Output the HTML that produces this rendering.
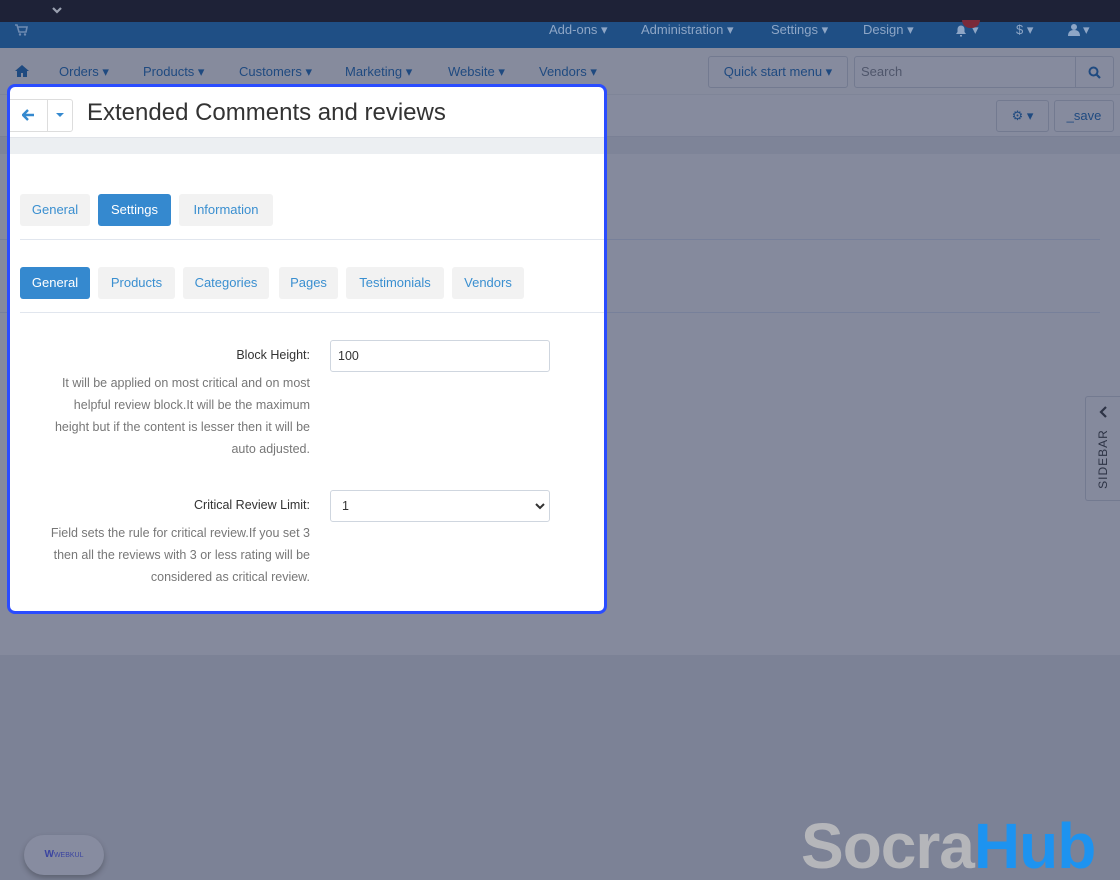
<!DOCTYPE html>
<html><head><meta charset="utf-8"><style>
*{box-sizing:border-box;margin:0;padding:0}
html,body{width:1120px;height:880px;overflow:hidden}
body{background:#7c8296;font-family:"Liberation Sans","DejaVu Sans",sans-serif;position:relative;font-size:13px}
.abs{position:absolute}
.top{left:0;top:0;width:1120px;height:22px;background:#1e2237}
.blue{left:0;top:22px;width:1120px;height:26px;background:#1f4f85;color:#8ea6c6;font-size:13px}
.blue span{position:absolute;top:0px}
.nav{left:0;top:48px;width:1120px;height:47px;background:#868b9d;border-bottom:1px solid #7f8598}
.nav span{position:absolute;top:16px;color:#1f4a80;font-size:13px}
.tool{left:0;top:95px;width:1120px;height:42px;background:#868b9e;border-bottom:1px solid #7a8095}
.band{left:0;top:137px;width:1120px;height:17px;background:#7e8498}
.main{left:0;top:154px;width:1120px;height:501px;background:#858a9d}
.btn{border:1px solid #737a90;border-radius:3px;color:#1f4a80;background:#868b9e}
.panel{left:7px;top:84px;width:600px;height:530px;background:#fff;border:3px solid #2a4cff;border-radius:8px;overflow:hidden}
.tab{position:absolute;height:32px;border-radius:3px;background:#f2f2f2;color:#3a8fd0;font-size:13px;line-height:32px;text-align:center}
.tab.on{background:#3589cf;color:#fff}
.lbl{position:absolute;right:294px;text-align:right;color:#333;font-size:12.5px}
.help{position:absolute;right:294px;text-align:right;color:#777;font-size:12.5px;line-height:22px;width:272px}
.inp{position:absolute;left:320px;width:220px;height:32px;border:1px solid #cfd6df;border-radius:3px;font-size:12.5px;color:#333;padding:8px 7px}
</style></head><body>
<div class="abs top"><svg class="abs" style="left:51px;top:6px" width="12" height="10"><path d="M2 2l4 4 4-4" stroke="#9aa0b0" stroke-width="2.2" fill="none"/></svg></div>
<div class="abs blue">
<svg class="abs" style="left:15px;top:2px" width="13" height="12"><path d="M0 1h2l2 7h7l1-5H3" stroke="#6f8bb2" stroke-width="1.6" fill="none"/><circle cx="5" cy="10.5" r="1.2" fill="#6f8bb2"/><circle cx="10" cy="10.5" r="1.2" fill="#6f8bb2"/></svg>
<span style="left:549px">Add-ons ▾</span><span style="left:641px">Administration ▾</span><span style="left:771px">Settings ▾</span><span style="left:863px">Design ▾</span>
<svg class="abs" style="left:954px;top:1px" width="14" height="14"><path d="M2 11h10l-1.5-2V6a3.5 3.5 0 0 0-7 0v3z M6 12h2v1.5H6z" fill="#8ea6c6"/></svg><span style="left:972px">▾</span>
<div class="abs" style="left:962px;top:-2px;width:18px;height:8px;background:#7a2a3a;border-radius:0 0 8px 8px"></div>
<span style="left:1016px">$ ▾</span>
<svg class="abs" style="left:1068px;top:1px" width="12" height="13"><circle cx="6" cy="4" r="3" fill="#8ea6c6"/><path d="M0 13c0-4 2-6 6-6s6 2 6 6z" fill="#8ea6c6"/></svg><span style="left:1083px">▾</span>
</div>
<div class="abs nav">
<svg class="abs" style="left:15px;top:17px" width="14" height="12"><path d="M7 0L0 6h2v6h4V8h2v4h4V6h2z" fill="#1f4a80"/></svg>
<span style="left:59px">Orders ▾</span><span style="left:143px">Products ▾</span><span style="left:239px">Customers ▾</span><span style="left:345px">Marketing ▾</span><span style="left:448px">Website ▾</span><span style="left:539px">Vendors ▾</span>
<div class="abs btn" style="left:708px;top:8px;width:140px;height:32px;line-height:30px;text-align:center">Quick start menu ▾</div>
<div class="abs btn" style="left:854px;top:8px;width:260px;height:32px;color:#4f566b;padding:7px 6px">Search</div>
<div class="abs" style="left:1075px;top:8px;width:1px;height:32px;background:#737a90"></div>
<svg class="abs" style="left:1088px;top:18px" width="13" height="13"><circle cx="5.5" cy="5.5" r="4" stroke="#1f4a80" stroke-width="2" fill="none"/><path d="M8.5 8.5l3.5 3.5" stroke="#1f4a80" stroke-width="2.2"/></svg>
</div>
<div class="abs tool">
<div class="abs btn" style="left:996px;top:5px;width:53px;height:32px;line-height:30px;text-align:center">⚙ ▾</div>
<div class="abs btn" style="left:1054px;top:5px;width:60px;height:32px;line-height:30px;text-align:center">_save</div>
</div>
<div class="abs band"></div>
<div class="abs main">
<div class="abs" style="left:0;top:85px;width:1100px;height:1px;background:#77809a"></div>
<div class="abs" style="left:0;top:158px;width:1100px;height:1px;background:#77809a"></div>
<div class="abs" style="left:1085px;top:242px;width:35px;height:105px;border:1px solid #737a90;border-right:none;border-radius:3px 0 0 3px"></div>
<svg class="abs" style="left:1098px;top:252px" width="10" height="12"><path d="M8 1L3 6l5 5" stroke="#2d3345" stroke-width="2.2" fill="none"/></svg>
<div class="abs" style="left:1068px;top:298px;transform:rotate(-90deg);width:70px;text-align:center;color:#2d3345;font-size:12px;letter-spacing:1px">SIDEBAR</div>
</div>
<div class="abs panel">
<div class="abs" style="left:-3px;top:12px;width:66px;height:33px;border:1px solid #ddd;border-radius:0 3px 3px 0"></div>
<div class="abs" style="left:37px;top:12px;width:1px;height:33px;background:#ddd"></div>
<svg class="abs" style="left:12px;top:22px" width="13" height="12"><path d="M12 6H2M6 1L1 6l5 5" stroke="#3589cf" stroke-width="2.4" fill="none"/></svg>
<svg class="abs" style="left:46px;top:26px" width="8" height="5"><path d="M0 0h8L4 4z" fill="#3589cf"/></svg>
<div class="abs" style="left:77px;top:12px;font-size:24px;color:#333">Extended Comments and reviews</div>
<div class="abs" style="left:0;top:50px;width:600px;height:17px;background:#eceff2;border-top:1px solid #e2e5ea"></div>
<div class="tab" style="left:10px;top:107px;width:70px">General</div>
<div class="tab on" style="left:88px;top:107px;width:73px">Settings</div>
<div class="tab" style="left:169px;top:107px;width:94px">Information</div>
<div class="abs" style="left:10px;top:152px;width:590px;height:1px;background:#e1e6ee"></div>
<div class="tab on" style="left:10px;top:180px;width:70px">General</div>
<div class="tab" style="left:88px;top:180px;width:77px">Products</div>
<div class="tab" style="left:173px;top:180px;width:86px">Categories</div>
<div class="tab" style="left:269px;top:180px;width:59px">Pages</div>
<div class="tab" style="left:336px;top:180px;width:98px">Testimonials</div>
<div class="tab" style="left:442px;top:180px;width:72px">Vendors</div>
<div class="abs" style="left:10px;top:225px;width:590px;height:1px;background:#e1e6ee"></div>
<div class="lbl" style="top:261px">Block Height:</div>
<div class="inp" style="top:253px">100</div>
<div class="help" style="top:285px">It will be applied on most critical and on most helpful review block.It will be the maximum height but if the content is lesser then it will be auto adjusted.</div>
<div class="lbl" style="top:411px">Critical Review Limit:</div>
<div class="inp" style="top:403px;padding-left:11px">1<svg class="abs" style="right:4px;top:12px" width="10" height="7"><path d="M1 1l4 4 4-4" stroke="#333" stroke-width="2" fill="none"/></svg></div>
<div class="help" style="top:435px">Field sets the rule for critical review.If you set 3 then all the reviews with 3 or less rating will be considered as critical review.</div>
</div>
<div class="abs" style="left:24px;top:835px;width:80px;height:40px;border-radius:20px;background:#878ca0;box-shadow:0 3px 6px rgba(0,0,0,.25);font-size:7px;color:#3a44a0;line-height:40px;text-align:center"><b style="font-size:10px">W</b>WEBKUL</div>
<div class="abs" style="left:801px;top:806px;font-size:64px;font-weight:bold;letter-spacing:-1px;line-height:80px;color:#b5b6ba;font-family:'Liberation Sans',sans-serif;white-space:nowrap">Socra<span style="color:#1d93f0">Hub</span></div>
</body></html>
